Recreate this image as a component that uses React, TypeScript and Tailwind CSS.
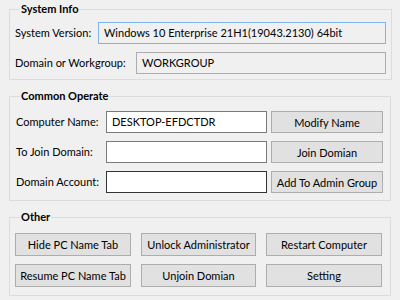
import type { ReactNode } from 'react';

type GroupProps = {
  title: string;
  children: ReactNode;
  className?: string;
};

function Group({ title, children, className = '' }: GroupProps) {
  return (
    <fieldset className={`border border-[#dcdcdc] ${className}`}>
      <legend className="ml-[5px] px-px text-[11px] font-bold leading-4 text-black">{title}</legend>
      {children}
    </fieldset>
  );
}

function Btn({ children, className = '' }: { children: ReactNode; className?: string }) {
  return (
    <button className={`flex shrink-0 items-center justify-center whitespace-nowrap border border-[#adadad] bg-[#e1e1e1] leading-none text-black ${className}`}>
      {children}
    </button>
  );
}

export default function App() {
  return (
    <div className="flex h-[300px] w-[400px] flex-col gap-2 overflow-hidden whitespace-nowrap bg-[#f0f0f0] pl-[9px] pr-[9px] pt-px font-['Lato',sans-serif] text-[11px] text-black">
      <Group title="System Info" className="pb-[5px] pl-[5px] pr-[5px]">
        <div className="mt-[5px] flex h-[22px] items-center">
          <span className="w-[83px] shrink-0">System Version:</span>
          <div className="flex h-[22px] w-[288px] shrink-0 items-center border border-[#7eb4ea] bg-[#f0f0f0] pl-[5px]">
            Windows 10 Enterprise 21H1(19043.2130) 64bit
          </div>
        </div>
        <div className="mt-[8px] flex h-[22px] items-center">
          <span className="w-[121px] shrink-0">Domain or Workgroup:</span>
          <div className="flex h-[22px] w-[250px] shrink-0 items-center border border-[#adadad] bg-[#f0f0f0] pl-[5px]">
            WORKGROUP
          </div>
        </div>
      </Group>

      <Group title="Common Operate" className="pb-[7px] pl-[5px] pr-[7px]">
        <div className="mt-[7px] flex flex-col gap-2">
          <div className="flex h-[22px] items-center">
            <span className="w-[91px] shrink-0 pl-px">Computer Name:</span>
            <div className="flex h-[22px] w-[161px] shrink-0 items-center border border-[#7a7a7a] bg-white pl-[5px]">
              DESKTOP-EFDCTDR
            </div>
            <Btn className="ml-[4px] h-[22px] w-[112px]">Modify Name</Btn>
          </div>
          <div className="flex h-[22px] items-center">
            <span className="w-[91px] shrink-0 pl-px">To Join Domain:</span>
            <div className="h-[22px] w-[161px] shrink-0 border border-[#7a7a7a] bg-white" />
            <Btn className="ml-[4px] h-[22px] w-[112px]">Join Domian</Btn>
          </div>
          <div className="flex h-[22px] items-center">
            <span className="w-[91px] shrink-0 pl-px">Domain Account:</span>
            <div className="h-[22px] w-[161px] shrink-0 border border-[#333333] bg-white" />
            <Btn className="ml-[4px] h-[22px] w-[112px]">Add To Admin Group</Btn>
          </div>
        </div>
      </Group>

      <Group title="Other" className="pb-[8px] pl-[5px] pr-[7px]">
        <div className="mt-[8px] grid grid-cols-[116px_115px_116px] gap-x-[10px] gap-y-[8px]">
          <Btn className="h-[23px]">Hide PC Name Tab</Btn>
          <Btn className="h-[23px]">Unlock Administrator</Btn>
          <Btn className="h-[23px]">Restart Computer</Btn>
          <Btn className="h-[23px]">Resume PC Name Tab</Btn>
          <Btn className="h-[23px]">Unjoin Domian</Btn>
          <Btn className="h-[23px]">Setting</Btn>
        </div>
      </Group>
    </div>
  );
}
